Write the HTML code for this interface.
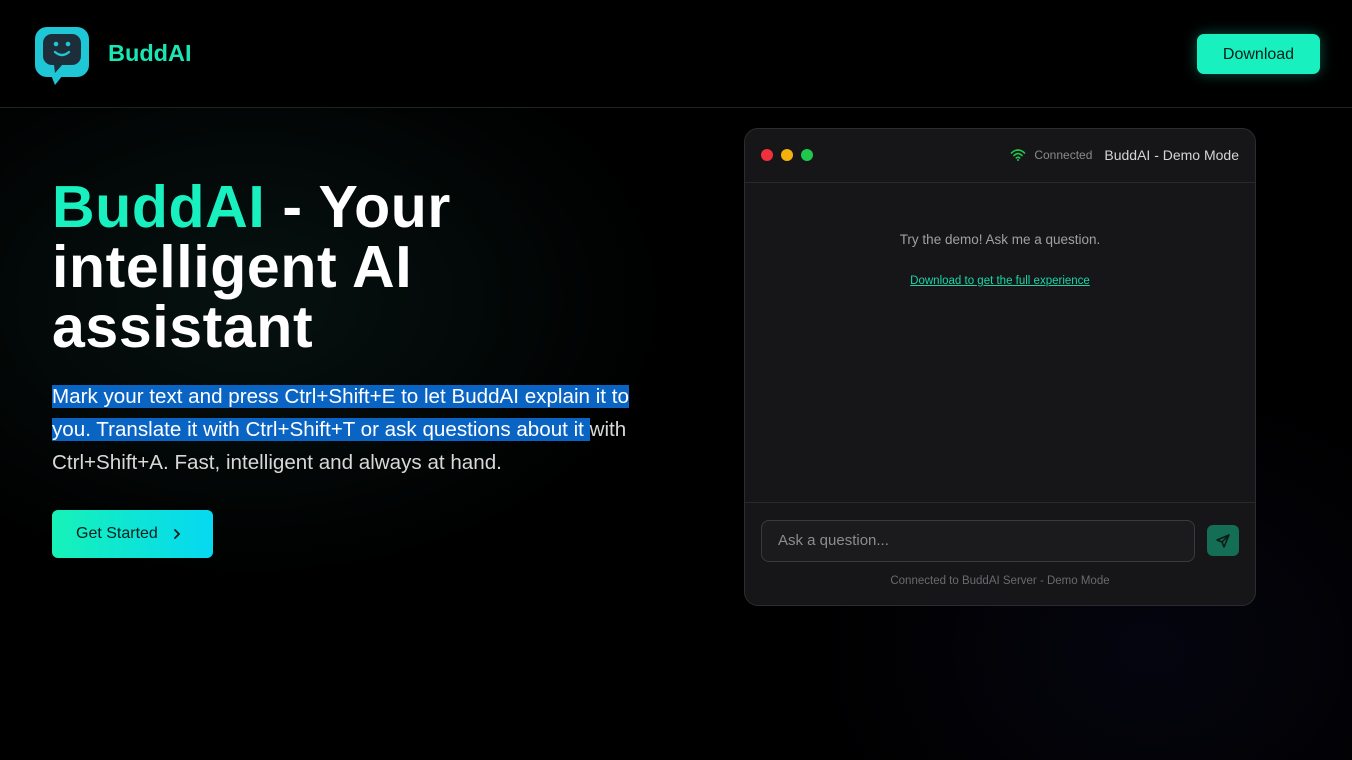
<!DOCTYPE html>
<html><head><meta charset="utf-8"><style>
*{margin:0;padding:0;box-sizing:border-box}
body{width:1352px;height:760px;overflow:hidden;background:#000;font-family:"Liberation Sans",sans-serif;color:#fff;position:relative}
.bg{position:absolute;inset:0;background:radial-gradient(ellipse 600px 400px at 250px 300px,rgba(20,60,55,.3),transparent 70%),radial-gradient(ellipse 500px 400px at 1150px 650px,rgba(20,20,60,.25),transparent 70%)}
header{position:absolute;left:0;top:0;width:1352px;height:108px;border-bottom:1px solid #1e2222;background:#000}
.logo{position:absolute;left:35px;top:27px}
.brand{position:absolute;left:108px;top:40px;font-size:23.5px;font-weight:bold;color:#19e6b4}
.dl{position:absolute;left:1197px;top:34px;width:123px;height:40px;border-radius:7px;background:#19f0c0;color:#05201a;font-size:16px;display:flex;align-items:center;justify-content:center;padding-top:1px;box-shadow:0 0 14px rgba(25,240,192,.35)}
h1{position:absolute;left:52px;top:177px;font-size:59px;line-height:60px;font-weight:bold;letter-spacing:0.6px}
h1 span{color:#19f0c0}
p.t{position:absolute;left:52px;top:380px;font-size:20.6px;line-height:33px;color:#d8d8d8;white-space:nowrap}
p.t mark{background:#0a64c4;color:#fff}
.gs{position:absolute;left:52px;top:510px;width:161px;height:48px;border-radius:6px;background:linear-gradient(90deg,#16f2b8,#06d8f2);color:#06201c;font-size:16px;display:flex;align-items:center;padding-left:24px}
.win{position:absolute;left:744px;top:128px;width:512px;height:478px;border:1px solid #2c2c30;border-radius:14px;background:#161618;overflow:hidden}
.bar{height:54px;border-bottom:1px solid #2a2a2e;position:relative}
.dot{position:absolute;top:20px;width:12px;height:12px;border-radius:50%}
.st{position:absolute;right:16px;top:18px;font-size:14px;color:#d5d5d5;display:flex;align-items:center}
.st small{font-size:12px;color:#8a8a8a;margin:0 12px 0 8px}
.msg{position:absolute;top:103px;width:100%;text-align:center;font-size:13.5px;color:#a0a0a0}
.lnk{position:absolute;top:146px;width:100%;text-align:center;font-size:11.5px;color:#19d6a8;text-decoration:underline}
.foot{position:absolute;left:0;top:373px;width:100%;height:105px;border-top:1px solid #2a2a2e}
.inp{position:absolute;left:16px;top:17px;width:434px;height:42px;border:1px solid #3a3a3e;border-radius:8px;background:#1b1b1e;color:#8c8c8c;font-size:15px;padding:11px 16px}
.send{position:absolute;left:462px;top:22px;width:32px;height:31px;border-radius:6px;background:#136e55;display:flex;align-items:center;justify-content:center}
.cap{position:absolute;top:72px;width:100%;text-align:center;font-size:11.5px;color:#6a6a6e}
</style></head><body>
<div class="bg"></div>
<header>
<svg class="logo" width="56" height="58" viewBox="0 0 56 58"><rect x="0" y="0" width="54" height="50" rx="12" fill="#1ec6d6"/><path d="M16 48 L20 58 L28 48 Z" fill="#1ec6d6"/><rect x="8" y="7" width="38" height="31" rx="9" fill="#1d2d3a"/><path d="M19 38 L20 46 L27 38Z" fill="#1d2d3a"/><circle cx="21" cy="17" r="2.3" fill="#1ec6d6"/><circle cx="33" cy="17" r="2.3" fill="#1ec6d6"/><path d="M20 25 Q27 31 34 25" stroke="#1ec6d6" stroke-width="2.3" fill="none" stroke-linecap="round"/></svg>
<div class="brand">BuddAI</div>
<div class="dl">Download</div>
</header>
<h1><span>BuddAI</span> - Your<br>intelligent AI<br>assistant</h1>
<p class="t"><mark>Mark your text and press Ctrl+Shift+E to let BuddAI explain it to</mark><br><mark>you. Translate it with Ctrl+Shift+T or ask questions about it </mark>with<br>Ctrl+Shift+A. Fast, intelligent and always at hand.</p>
<div class="gs">Get Started <svg style="margin-left:14px" width="10" height="12" viewBox="0 0 10 12"><path d="M3 2 L7 6 L3 10" stroke="#06201c" stroke-width="1.8" fill="none" stroke-linecap="round"/></svg></div>
<div class="win">
<div class="bar">
<div class="dot" style="left:16px;background:#f0303c"></div>
<div class="dot" style="left:36px;background:#f4b00c"></div>
<div class="dot" style="left:56px;background:#1ec84a"></div>
<div class="st"><svg width="16" height="14" viewBox="0 0 16 14"><path d="M1.5 5 Q8 -1 14.5 5 M4 7.5 Q8 3.5 12 7.5 M6.3 10 Q8 8.5 9.7 10" stroke="#1ec84a" stroke-width="1.6" fill="none" stroke-linecap="round"/><circle cx="8" cy="12" r="1" fill="#1ec84a"/></svg><small>Connected</small>BuddAI - Demo Mode</div>
</div>
<div class="msg">Try the demo! Ask me a question.</div>
<div class="lnk">Download to get the full experience</div>
<div class="foot">
<div class="inp">Ask a question...</div>
<div class="send"><svg width="16" height="16" viewBox="0 0 16 16"><path d="M14 2 L2 7 L7 9 L9 14 Z M14 2 L7 9" stroke="#0a1a14" stroke-width="1.5" fill="none" stroke-linejoin="round"/></svg></div>
<div class="cap">Connected to BuddAI Server - Demo Mode</div>
</div>
</div>
</body></html>
